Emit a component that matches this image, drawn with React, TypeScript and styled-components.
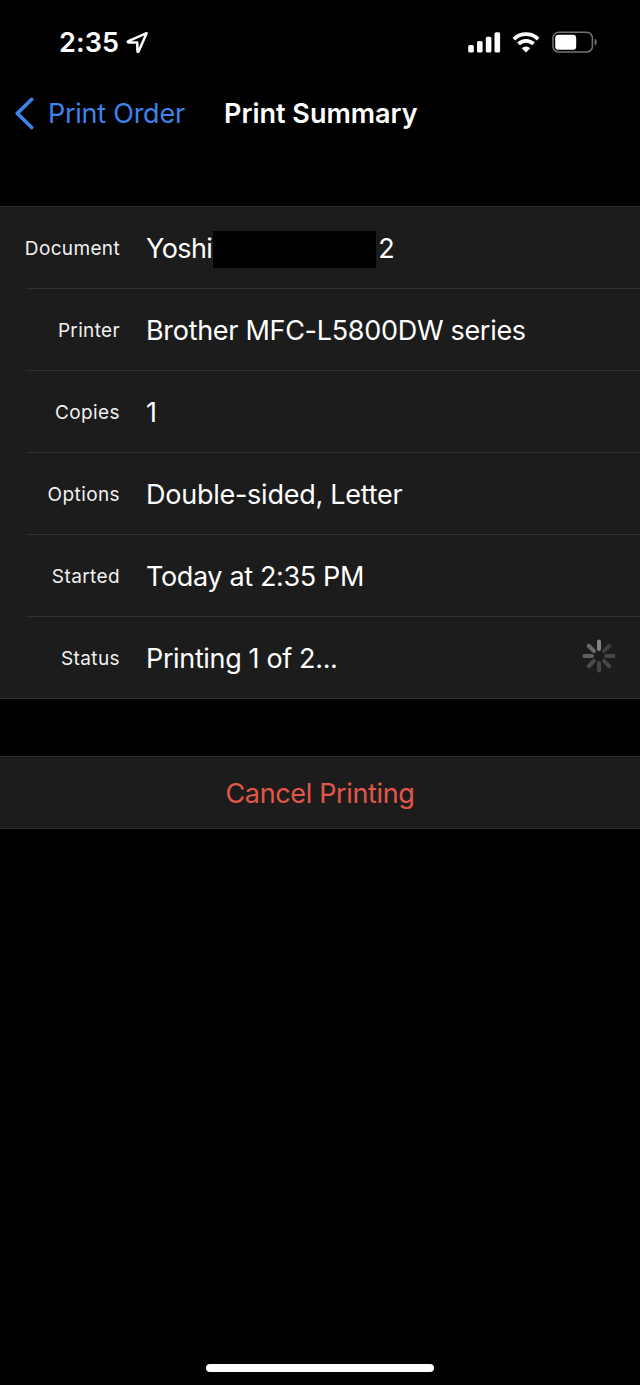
import React from 'react';
import styled, { createGlobalStyle } from 'styled-components';

const GlobalStyle = createGlobalStyle`
  *, *::before, *::after { box-sizing: border-box; }
  body { margin: 0; background: #000; }
`;

const Screen = styled.div`
  display: flex;
  flex-direction: column;
  width: 640px;
  height: 1385px;
  background: #000;
  color: #fff;
  font-family: Inter, 'Liberation Sans', sans-serif;
  font-size: 27px;
  line-height: 34px;
  overflow: hidden;
`;

const Text = styled.span<{ $spacing?: number }>`
  letter-spacing: ${({ $spacing = 0 }) => $spacing}px;
  white-space: pre;
`;

const StatusBar = styled.header`
  display: flex;
  align-items: center;
  justify-content: space-between;
  height: 85px;
  padding: 0 42px 0 59px;
`;

const Clock = styled.div`
  display: flex;
  align-items: center;
  gap: 7px;
  font-weight: 580;
`;

const Indicators = styled.div`
  display: flex;
  align-items: center;
  padding-bottom: 1px;
`;

const NavBar = styled.nav`
  display: grid;
  grid-template-columns: 210px 1fr;
  align-items: center;
  height: 57px;
  padding-left: 14px;
`;

const BackButton = styled.a`
  display: flex;
  align-items: center;
  gap: 13px;
  color: #3e83ea;
`;

const Title = styled.h1`
  margin: 0;
  font-size: 27px;
  line-height: 34px;
  font-weight: 580;
`;

const List = styled.section`
  margin-top: 64px;
  border-top: 1px solid #2b2b2b;
  border-bottom: 1px solid #2f2f2f;
  background: #1c1c1c;
`;

const Row = styled.div`
  display: grid;
  grid-template-columns: 94px 1fr auto;
  column-gap: 26px;
  align-items: center;
  height: 82px;
  margin-left: 26px;
  padding-right: 24px;
  border-bottom: 1px solid #303030;

  &:last-child {
    height: 81px;
    border-bottom: 0;
  }
`;

const Label = styled.span`
  display: flex;
  justify-content: flex-end;
  padding-top: 2px;
  font-size: 19px;
  color: #f0f0f0;
`;

const Value = styled.span`
  display: flex;
  align-items: center;
  padding-top: 3px;
`;

const Redaction = styled.span`
  width: 163px;
  height: 37px;
  margin: 0 2px 0 1px;
  background: #000;
`;

const CancelButton = styled.button`
  display: flex;
  align-items: center;
  justify-content: center;
  height: 73px;
  margin: 57px 0 0;
  padding: 2px 0 0;
  border: solid #2b2b2b;
  border-width: 1px 0;
  background: #1c1c1c;
  color: #e2574a;
  font: inherit;
`;

const HomeIndicator = styled.div`
  width: 228px;
  height: 8px;
  margin: auto auto 13px;
  border-radius: 4px;
  background: #fff;
`;

const LocationIcon = () => (
  <svg width="23" height="23" viewBox="0 0 23 23" fill="none">
    <path d="M20.6 2.2 2.4 10.1C1.4 10.6 1.6 11.4 2.6 11.4L11.3 11.5 11.4 20.1C11.4 21.2 12.2 21.3 12.7 20.3Z" stroke="#fff" strokeWidth="2.5" strokeLinejoin="round" />
  </svg>
);

const SignalIcon = () => (
  <svg width="33" height="22" viewBox="0 0 33 22" fill="#fff">
    <rect x="0.2" y="14" width="5.6" height="7.6" rx="1.6" />
    <rect x="9" y="10" width="5.6" height="11.6" rx="1.6" />
    <rect x="17.8" y="5.8" width="5.6" height="15.8" rx="1.6" />
    <rect x="26.5" y="1.2" width="5.6" height="20.4" rx="1.6" />
  </svg>
);

const WifiIcon = styled.svg.attrs({
  width: 28,
  height: 22,
  viewBox: '0 0 28 22',
  fill: 'none',
  children: (
    <>
      <path d="M1.9 8.1a17.3 17.3 0 0 1 24.2 0" stroke="#fff" strokeWidth="3.7" />
      <path d="M6.5 12.9a10.8 10.8 0 0 1 15 0" stroke="#fff" strokeWidth="3.7" />
      <path d="M14 21.5 9.8 17.2a6 6 0 0 1 8.4 0Z" fill="#fff" />
    </>
  ),
})`
  margin-left: 11px;
`;

const BatteryIcon = styled.svg.attrs({
  width: 46,
  height: 22,
  viewBox: '0 0 46 22',
  fill: 'none',
  children: (
    <>
      <rect x="1" y="1.3" width="39.4" height="19.8" rx="5.8" stroke="#747474" strokeWidth="1.5" />
      <rect x="3.2" y="3.8" width="21" height="15" rx="3.4" fill="#fff" />
      <path d="M42.7 7.7c2.8 1.1 2.8 5.7 0 6.8Z" fill="#747474" />
    </>
  ),
})`
  margin-left: 12px;
`;

const BackIcon = () => (
  <svg width="21" height="34" viewBox="0 0 21 34" fill="none">
    <path d="M17.7 2.3 3.3 16.4 17.7 30.5" stroke="currentColor" strokeWidth="3.6" strokeLinecap="round" strokeLinejoin="round" />
  </svg>
);

const spokes = ['#848484', '#3e3e3e', '#464646', '#464646', '#464646', '#4c4c4c', '#606060', '#6a6a6a'];

const Spinner = () => (
  <svg width="34" height="37" viewBox="0 0 34 37">
    {spokes.map((color, i) => (
      <rect key={i} x="15" y="0.5" width="4" height="11.5" rx="2" fill={color} transform={`rotate(${i * 45} 17 17)`} />
    ))}
  </svg>
);

const rows = [
  { label: 'Printer', ls: 0.35, value: 'Brother MFC-L5800DW series', vs: -0.3 },
  { label: 'Copies', ls: 0.4, value: '1', vs: 0 },
  { label: 'Options', ls: 0.4, value: 'Double-sided, Letter', vs: -0.25 },
  { label: 'Started', ls: 0.4, value: 'Today at 2:35 PM', vs: -0.36 },
  { label: 'Status', ls: 0.4, value: 'Printing 1 of 2...', vs: -0.36, busy: true },
];

export default function App() {
  return (
    <Screen>
      <GlobalStyle />
      <StatusBar>
        <Clock><Text $spacing={0.1}>2:35</Text><LocationIcon /></Clock>
        <Indicators><SignalIcon /><WifiIcon /><BatteryIcon /></Indicators>
      </StatusBar>
      <NavBar>
        <BackButton><BackIcon /><Text $spacing={-0.25}>Print Order</Text></BackButton>
        <Title><Text>Print Summary</Text></Title>
      </NavBar>
      <List>
        <Row>
          <Label><Text $spacing={0.35}>Document</Text></Label>
          <Value><Text $spacing={-0.6}>Yoshi</Text><Redaction /><Text>2</Text></Value>
        </Row>
        {rows.map((row) => (
          <Row key={row.label}>
            <Label><Text $spacing={row.ls}>{row.label}</Text></Label>
            <Value><Text $spacing={row.vs}>{row.value}</Text></Value>
            {row.busy && <Spinner />}
          </Row>
        ))}
      </List>
      <CancelButton><Text $spacing={-0.35}>Cancel Printing</Text></CancelButton>
      <HomeIndicator />
    </Screen>
  );
}
